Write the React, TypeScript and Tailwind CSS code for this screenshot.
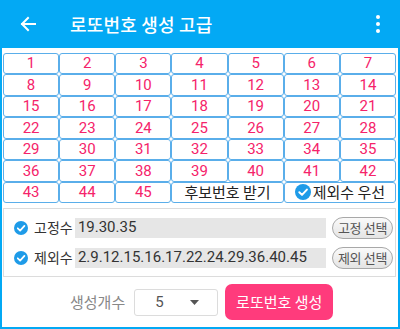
import React from "react";

const font = { fontFamily: '"Noto Sans CJK KR", Roboto, sans-serif' };

function Check({ size = 15 }: { size?: number }) {
  return (
    <svg width={size} height={size} viewBox="0 0 16 16" className="shrink-0">
      <circle cx="8" cy="8" r="8" fill="#1E9BE8" />
      <path d="M4.3 8.3 L7 10.9 L11.9 5.6" fill="none" stroke="#fff" strokeWidth="2" strokeLinecap="round" strokeLinejoin="round" />
    </svg>
  );
}

export default function App() {
  const nums = Array.from({ length: 45 }, (_, i) => i + 1);
  return (
    <div className="w-[400px] h-[329px] bg-white flex flex-col overflow-hidden" style={font}>
      <div className="h-[48px] bg-[#03A9F4] flex items-center shrink-0">
        <svg width="16" height="16" viewBox="0 0 16 16" className="ml-[20px]">
          <path d="M15 8 H2 M8 2 L2 8 L8 14" fill="none" stroke="#fff" strokeWidth="2" strokeLinecap="square" />
        </svg>
        <div className="ml-[34px] text-white text-[18px] font-medium tracking-[0.2px]">로또번호 생성 고급</div>
        <div className="ml-auto mr-[20px] flex flex-col gap-[3px]">
          <span className="w-[4px] h-[4px] rounded-full bg-white" />
          <span className="w-[4px] h-[4px] rounded-full bg-white" />
          <span className="w-[4px] h-[4px] rounded-full bg-white" />
        </div>
      </div>
      <div className="flex-1 border-2 border-t-0 border-[#03A9F4] pl-px pr-[2px] pt-[5px] flex flex-col">
        <div className="grid grid-cols-7 grid-rows-7 h-[150px]">
          {nums.map((n) => (
            <div
              key={n}
              className="border border-[#5AAEEA] rounded-[3px] flex items-center justify-center text-[15px] text-[#F5236A]"
              style={{ fontFamily: "Roboto, sans-serif" }}
            >
              {n}
            </div>
          ))}
          <div className="col-span-2 border border-[#5AAEEA] rounded-[3px] flex items-center justify-center text-[15px] text-[#222]">
            후보번호 받기
          </div>
          <div className="col-span-2 border border-[#5AAEEA] rounded-[3px] flex items-center justify-center gap-[2px] text-[15px] text-[#222]">
            <Check size={16} />
            <span>제외수 우선</span>
          </div>
        </div>
        <div className="mt-[5px] h-[69px] border border-[#dcdcdc] flex flex-col justify-center gap-[8px] pl-[10px] pr-[2px]">
          <div className="flex items-center h-[22px]">
            <Check size={14} />
            <span className="ml-[6px] text-[14px] text-[#333] w-[41px]">고정수</span>
            <div className="w-[252px] h-[20px] bg-[#e6e6e6] flex items-center pl-[3px] text-[15px] text-[#333]" style={{ fontFamily: "Roboto, sans-serif" }}>
              19.30.35
            </div>
            <button className="ml-[6px] w-[61px] h-[22px] rounded-full border border-[#a8a8a8] bg-gradient-to-b from-[#fafafa] to-[#e4e4e4] text-[13px] tracking-[-0.3px] text-[#555] flex items-center justify-center">
              고정 선택
            </button>
          </div>
          <div className="flex items-center h-[22px]">
            <Check size={14} />
            <span className="ml-[6px] text-[14px] text-[#333] w-[41px]">제외수</span>
            <div className="w-[252px] h-[20px] bg-[#e6e6e6] flex items-center pl-[3px] text-[15px] text-[#333]" style={{ fontFamily: "Roboto, sans-serif" }}>
              2.9.12.15.16.17.22.24.29.36.40.45
            </div>
            <button className="ml-[6px] w-[61px] h-[22px] rounded-full border border-[#a8a8a8] bg-gradient-to-b from-[#fafafa] to-[#e4e4e4] text-[13px] tracking-[-0.3px] text-[#555] flex items-center justify-center">
              제외 선택
            </button>
          </div>
        </div>
        <div className="flex-1 flex items-center pl-[67px]">
          <span className="text-[15px] text-[#888]">생성개수</span>
          <div className="ml-[9px] w-[84px] h-[27px] border border-[#dcdcdc] rounded-[3px] flex items-center pl-[20px] pr-[18px] text-[15px] text-[#555]" style={{ fontFamily: "Roboto, sans-serif" }}>
            <span>5</span>
            <svg width="9" height="5" viewBox="0 0 9 5" className="ml-auto">
              <path d="M0 0 H9 L4.5 5 Z" fill="#555" />
            </svg>
          </div>
          <button className="ml-[7px] w-[108px] h-[36px] rounded-[7px] bg-[#FF3B7C] text-white text-[15px] flex items-center justify-center">
            로또번호 생성
          </button>
        </div>
      </div>
    </div>
  );
}
